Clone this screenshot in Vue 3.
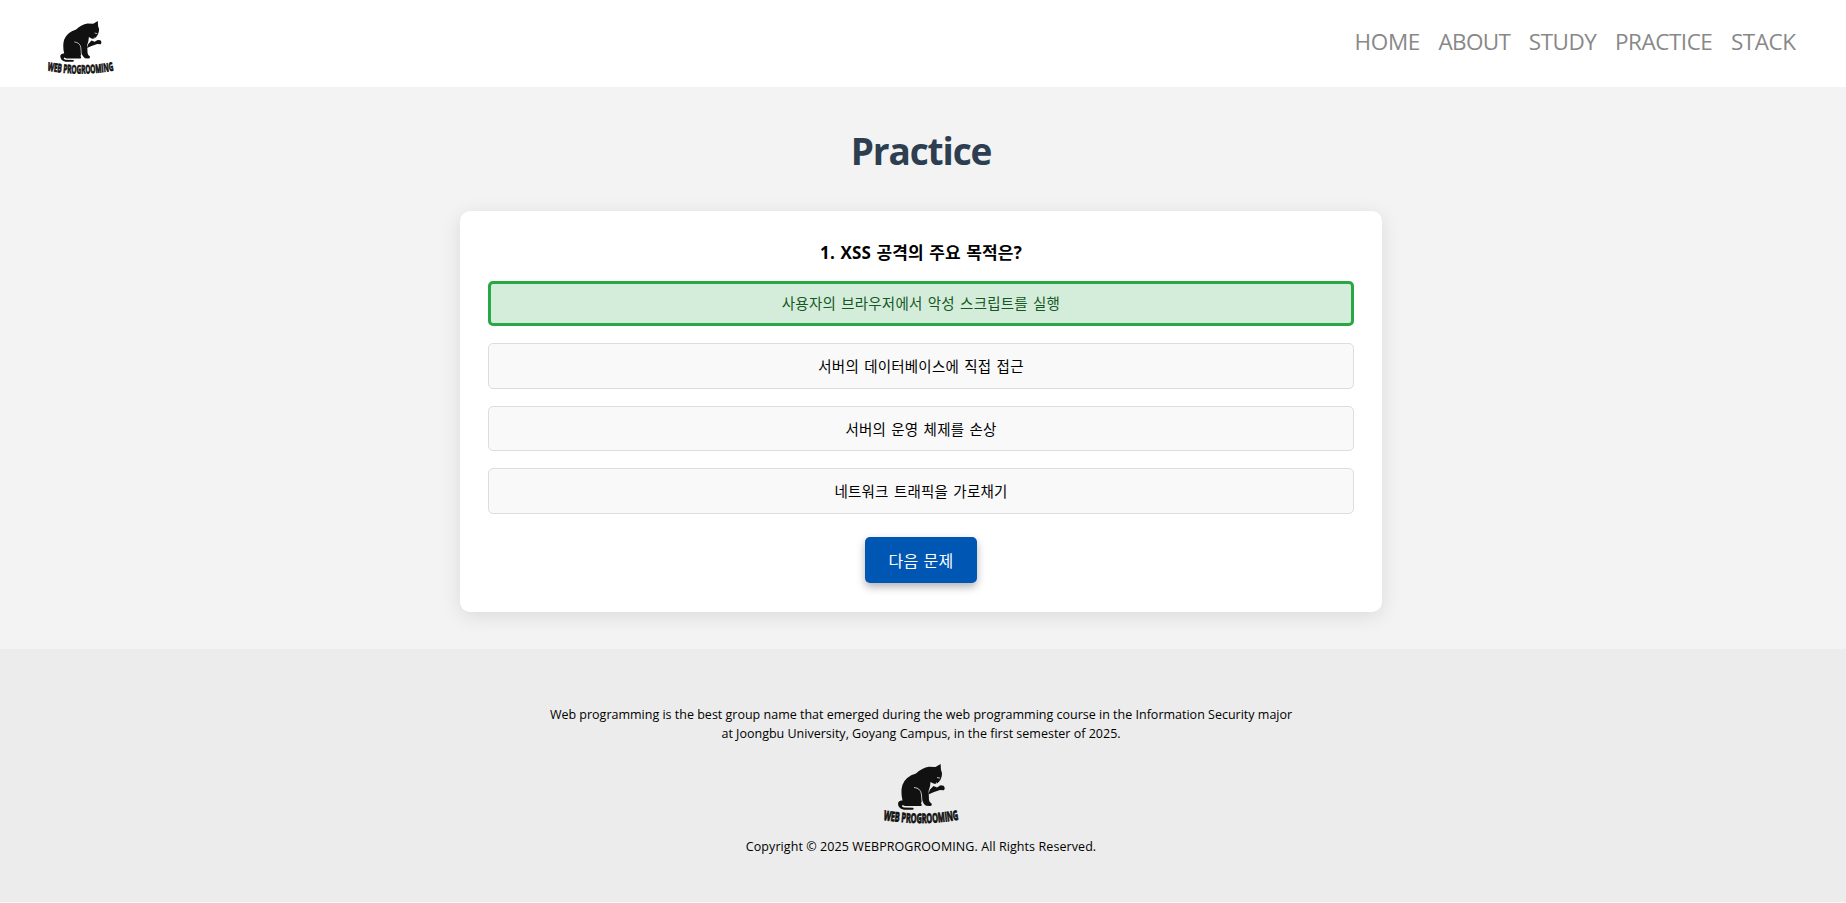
<script setup>
import { h } from 'vue'

const navItems = ['HOME', 'ABOUT', 'STUDY', 'PRACTICE', 'STACK']
const options = [
  { text: '사용자의 브라우저에서 악성 스크립트를 실행', correct: true },
  { text: '서버의 데이터베이스에 직접 접근' },
  { text: '서버의 운영 체제를 손상' },
  { text: '네트워크 트래픽을 가로채기' }
]

const Logo = (props) =>
  h('svg', { viewBox: '0 0 76 60', preserveAspectRatio: 'none', role: 'img', 'aria-label': 'Web Progrooming' }, [
    h('path', {
      fill: '#111',
      d: 'M57.6 0 L58 6 Q59.6 9 58.8 12 L57.6 15.5 L55.5 18.5 Q53 20.5 50.5 19.5 L47.5 18 Q47.5 22 45.6 27 L46 36 Q46.5 39 48.5 39.5 Q49.5 41.8 47 42 L43 41.8 Q40.6 40.5 39.2 36.5 L38 39.3 Q39.8 41.8 37.5 42 L22 42 L19.5 41 Q18 43 21 43.4 L30 43.7 Q31.5 45 29.5 45.8 L21 45.8 Q14 44 15.2 38.5 Q16.5 36 19.5 36.5 Q17.4 28 19.4 21 Q22.5 12.5 33 9.5 Q39 3.6 46 2.7 L52.5 3 Z'
    }),
    h('path', {
      fill: '#111',
      d: 'M45.3 30.4 L46.8 25.8 L50.5 22 L54 23.4 L57.5 21.3 L60.5 21.7 Q62.8 24 60.8 26.2 L57 25.9 Q50 28 45.3 30.4 Z'
    }),
    h('path', {
      fill: 'none', stroke: '#eee', 'stroke-width': 0.8,
      d: 'M31 23.5 Q37.5 24 38.4 30 L39 37.5 M54 13.5 L57 14.2 M53.5 18.5 L54 21 L56 20.5 M55.5 18 L56.5 20'
    }),
    h('path', { id: props.curve, d: 'M0.2 55.6 Q38 62.4 75.8 55.6', fill: 'none' }),
    h('text', { class: 'word' }, [
      h('textPath', { href: '#' + props.curve, textLength: 76, lengthAdjust: 'spacingAndGlyphs' }, 'WEB PROGROOMING')
    ])
  ])
Logo.props = ['curve']
</script>

<template>
  <div class="page">
    <header class="header">
      <Logo class="logo top-logo" curve="curve-top" />
      <nav class="nav">
        <a v-for="item in navItems" :key="item" :class="item.toLowerCase()">{{ item }}</a>
      </nav>
    </header>
    <main class="main">
      <h1>Practice</h1>
      <section class="card">
        <h2>1. XSS 공격의 주요 목적은?</h2>
        <ul class="options">
          <li v-for="o in options" :key="o.text" :class="{ correct: o.correct }">{{ o.text }}</li>
        </ul>
        <button class="next">다음 문제</button>
      </section>
    </main>
    <footer class="footer">
      <p class="about-line">Web programming is the best group name that emerged during the web programming course in the Information Security major</p>
      <p class="place-line">at Joongbu University, Goyang Campus, in the first semester of 2025.</p>
      <Logo class="logo footer-logo" curve="curve-footer" />
      <p class="copyright">Copyright © 2025 WEBPROGROOMING. All Rights Reserved.</p>
    </footer>
  </div>
</template>

<style>
html, body { background: #fff; overflow: hidden; }
.logo .word {
  font: bold 13px "Open Sans", sans-serif;
  fill: #111;
  stroke: #111;
  stroke-width: 0.9px;
}
</style>

<style scoped>
* { box-sizing: border-box; }
.page {
  height: 903px;
  padding-right: 4px;
  font-family: "Open Sans", "Noto Sans CJK KR", sans-serif;
  color: #000;
  background: linear-gradient(#fff 87px, #f3f3f3 87px, #f3f3f3 649px, #ececec 649px, #ececec 902px, #f9f9f9 902px);
}
.header {
  height: 87px;
  display: flex;
  justify-content: space-between;
  padding: 20px 46.5px 0 46.5px;
}
.logo { display: block; overflow: visible; }
.top-logo { width: 67px; height: 53.5px; margin-top: 0.7px; }
.nav { display: flex; gap: 18.6px; font-size: 22.5px; line-height: 44px; letter-spacing: -.48px; color: #888; }
.nav .home { letter-spacing: -.35px; }
.nav .about { letter-spacing: -.68px; }
.main { height: 562px; padding-top: 36px; }
h1 {
  margin: 0;
  text-align: center;
  font-size: 37px;
  line-height: 56px;
  letter-spacing: -1.15px;
  color: #2c3e50;
}
.card {
  width: 922px;
  height: 401px;
  margin: 32px auto 0;
  padding: 28px;
  background: #fff;
  border-radius: 10px;
  box-shadow: 0 4px 20px rgba(0, 0, 0, .1);
  text-align: center;
}
h2 { margin: 0; font-size: 17px; line-height: 27px; letter-spacing: .15px; word-spacing: .9px; }
.options { list-style: none; margin: 15px 0 0; padding: 0; display: grid; gap: 17px; }
.options li {
  height: 45.4px;
  line-height: 45.4px;
  font-size: 14.5px;
  letter-spacing: .2px;
  word-spacing: 1.3px;
  background: #f9f9f9;
  border: 1px solid #ddd;
  border-radius: 5px;
}
.options .correct {
  line-height: 40.6px;
  border: 3px solid #28a745;
  background: #d4edda;
  color: #155724;
}
.next {
  display: block;
  width: 112px;
  height: 46px;
  margin: 23.4px auto 0;
  padding: 0;
  border: 0;
  border-radius: 5px;
  background: #0056b3;
  box-shadow: 0 4px 8px rgba(0, 0, 0, .3);
  color: #fff;
  font: 16px "Noto Sans CJK KR", sans-serif;
  letter-spacing: .2px;
  word-spacing: 1.4px;
}
.footer { height: 253px; padding-top: 56px; text-align: center; font-size: 12.5px; line-height: 19px; }
.footer p { margin: 0; white-space: nowrap; }
.footer-logo { width: 76px; height: 60px; margin: 21px auto 13px; }
.footer .copyright { letter-spacing: .08px; }
</style>
